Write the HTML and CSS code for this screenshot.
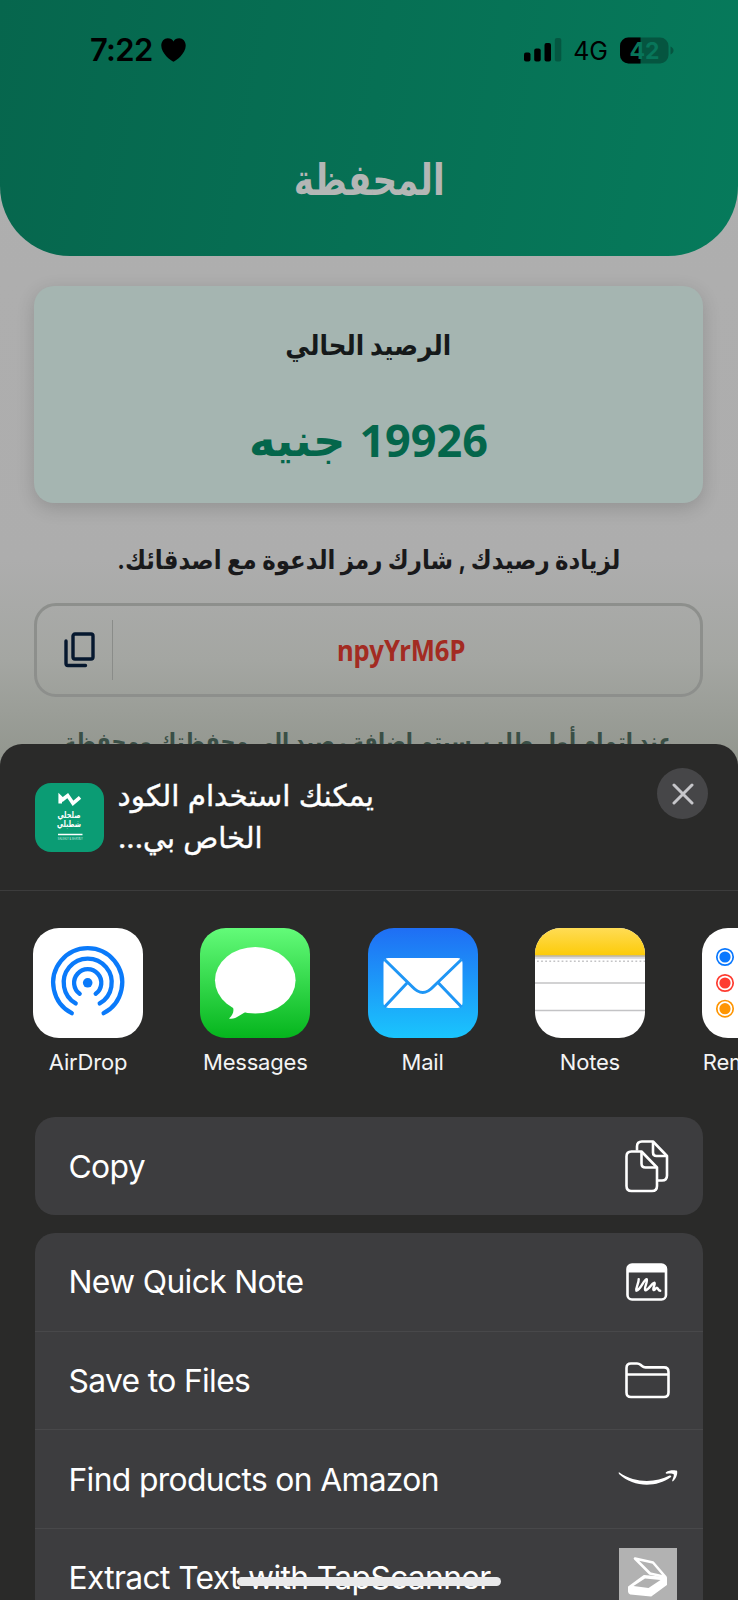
FILE: index.html
```html
<!DOCTYPE html>
<html lang="ar">
<head>
<meta charset="utf-8">
<title>المحفظة</title>
<link rel="stylesheet" href="styles.css">
</head>
<body>
<div class="screen">
  <header class="header">
    <div class="status">
      <div class="status-left">
        <span class="time">7:22</span>
        <svg class="heart" width="25" height="24" viewBox="0 0 26 24" preserveAspectRatio="none"><path d="M13 23.800C10 22.500.3 15.500.3 7.800.3 3.300 3.300.3 7 .3c2.700 0 4.900 1.200 6 3.200C14.100 1.500 16.300.3 19 .3c3.700 0 6.700 3 6.700 7.500C25.700 15.500 16 22.500 13 23.800z"/></svg>
      </div>
      <div class="status-right">
        <svg class="bars" width="38" height="24" viewBox="0 0 38 24"><rect x="0" y="14.500" width="6.500" height="9" rx="2"/><rect x="10.200" y="10.500" width="6.500" height="13" rx="2"/><rect x="20.500" y="5" width="6.500" height="18.500" rx="2"/><rect x="30.800" y="0" width="6.500" height="23.500" rx="2" opacity=".25"/></svg>
        <span class="net">4G</span>
        <svg class="battery" width="54" height="27" viewBox="0 0 54 27">
          <defs><clipPath id="lvl"><rect width="20.500" height="27"/></clipPath></defs>
          <rect x="0" y=".5" width="48.500" height="26" rx="8.500" fill="#055540"/>
          <path d="M50.500 9.500c2 .8 3 2.300 3 4s-1 3.200-3 4z" fill="#055540"/>
          <rect x="0" y=".5" width="48.500" height="26" rx="8.500" clip-path="url(#lvl)"/>
          <text class="pct" x="24.500" y="22" text-anchor="middle" fill="#08755a">42</text>
        </svg>
      </div>
    </div>
    <h1 class="title" dir="rtl"><span class="fit fit-title">المحفظة</span></h1>
  </header>

  <main class="wallet">
    <section class="balance">
      <div class="balance-label" dir="rtl"><span class="fit fit-label">الرصيد الحالي</span></div>
      <div class="balance-value" dir="rtl"><span class="amount">19926</span><span class="fit fit-unit">جنيه</span></div>
    </section>
    <p class="invite" dir="rtl"><span class="fit fit-invite">لزيادة رصيدك , شارك رمز الدعوة مع اصدقائك.</span></p>
    <div class="code-box">
      <div class="code-copy">
        <svg width="32" height="36" viewBox="0 0 32 36" fill="none" stroke="#06182f" stroke-width="3.400" stroke-linejoin="round" stroke-linecap="round"><rect x="9" y="2" width="20" height="25" rx="2"/><path d="M2 9v22.500a2 2 0 0 0 2 2h17.500"/></svg>
      </div>
      <div class="code"><span class="fit fit-code">npyYrM6P</span></div>
    </div>
    <p class="terms" dir="rtl"><span class="fit fit-terms">عند إتمام أول طلب, سيتم إضافة رصيد إلى محفظتك ومحفظة</span></p>
  </main>

  <section class="sheet">
    <div class="sheet-head">
      <svg class="app-logo" width="69" height="69" viewBox="0 0 69 69">
        <rect width="69" height="69" rx="16" fill="#0b9c74"/>
        <path d="M25.200 20.500V14l2.500 2.500 5-4 5.300 7.800 7-6" fill="none" stroke="#fff" stroke-width="3.600"/>
        <text x="34" y="34.500" class="logo-ar" text-anchor="middle" textLength="23" lengthAdjust="spacingAndGlyphs">صلحلي</text>
        <text x="34" y="44" class="logo-ar" text-anchor="middle" textLength="24" lengthAdjust="spacingAndGlyphs">شطبلي</text>
        <path d="M23 51.500h24.500" stroke="#fff" stroke-width="1.500"/>
        <text x="35.300" y="57" class="logo-en" text-anchor="middle" textLength="25" lengthAdjust="spacingAndGlyphs">SALEHLY &amp; SHATBLY</text>
      </svg>
      <div class="share-text">
        <div dir="rtl"><span class="fit">يمكنك استخدام الكود</span></div>
        <div dir="rtl"><span class="fit fit-s2">الخاص بي...</span></div>
      </div>
      <div class="close">
        <svg width="22" height="22" viewBox="0 0 22 22" stroke="#c6c6ca" stroke-width="3" stroke-linecap="round"><path d="M2 2l18 18M20 2L2 20"/></svg>
      </div>
    </div>

    <div class="apps">
      <div class="app">
        <svg class="tile" viewBox="0 0 110 110"><rect width="110" height="110" rx="26" fill="#fff"/>
          <g fill="none" stroke="#0a7afa" stroke-width="4.300" stroke-linecap="round"><path d="M38.800 85.200A34.500 34.500 0 1 1 70.600 85.200"/><path d="M42.700 75.400A24 24 0 1 1 66.700 75.400"/><path d="M46.700 65.800A13.600 13.600 0 1 1 62.700 65.800"/></g><circle cx="54.700" cy="54.800" r="4.800" fill="#0a7afa"/></svg>
        <span>AirDrop</span>
      </div>
      <div class="app">
        <svg class="tile" viewBox="0 0 110 110"><defs><linearGradient id="gm" x2="0" y2="1"><stop stop-color="#63fb79"/><stop offset="1" stop-color="#05b51d"/></linearGradient></defs>
          <rect width="110" height="110" rx="26" fill="url(#gm)"/><ellipse cx="55.300" cy="52.300" rx="40.300" ry="33.300" fill="#fff"/><path d="M32 77c3 5 1 10-3 13.500 6 1.300 11-3.500 16-6.200L50 78z" fill="#fff"/></svg>
        <span>Messages</span>
      </div>
      <div class="app">
        <svg class="tile" viewBox="0 0 110 110"><defs><linearGradient id="gl" x2="0" y2="1"><stop stop-color="#1f6ef4"/><stop offset="1" stop-color="#1ac5fd"/></linearGradient></defs>
          <rect width="110" height="110" rx="26" fill="url(#gl)"/><rect x="15.500" y="30" width="79" height="50" rx="5" fill="#fff"/>
          <path d="M16.500 31.500L44 58.500c7.500 8 14 8 21.500 0L93.500 31.500M39.500 54.500L16.500 79M70 54.500L93.500 79" fill="none" stroke="#1f96f5" stroke-width="3"/></svg>
        <span>Mail</span>
      </div>
      <div class="app">
        <svg class="tile" viewBox="0 0 110 110"><defs><linearGradient id="gn" x2="0" y2="1"><stop stop-color="#ffdc55"/><stop offset="1" stop-color="#fccb08"/></linearGradient><clipPath id="cn"><rect width="110" height="110" rx="26"/></clipPath></defs>
          <g clip-path="url(#cn)"><rect width="110" height="110" fill="#fff"/><rect width="110" height="27.500" fill="url(#gn)"/><rect y="27.300" width="110" height="1.500" fill="#b3a988"/><rect y="28.800" width="110" height="2" fill="#d8d7dc"/>
          <path d="M2 33.300h108" stroke="#c4c4c6" stroke-width="1.600" stroke-dasharray="1.800 2.300"/><path d="M0 55h110M0 82.500h110" stroke="#c3c3c5" stroke-width="1.300"/></g></svg>
        <span>Notes</span>
      </div>
      <div class="app">
        <svg class="tile" viewBox="0 0 110 110"><rect width="110" height="110" rx="26" fill="#fff"/>
          <g fill="none" stroke-width="1.700"><circle cx="23" cy="29" r="8.200" stroke="#0a78fe"/><circle cx="23" cy="55" r="8.200" stroke="#fe3b30"/><circle cx="23" cy="80.700" r="8.200" stroke="#fe9502"/></g>
          <circle cx="23" cy="29" r="5.600" fill="#0a78fe"/><circle cx="23" cy="55" r="5.600" fill="#fe3b30"/><circle cx="23" cy="80.700" r="5.600" fill="#fe9502"/></svg>
        <span>Reminders</span>
      </div>
    </div>

    <div class="group">
      <div class="row"><span>Copy</span>
        <svg width="60" height="58" viewBox="0 0 60 58" fill="none" stroke="#fff" stroke-width="2.600" stroke-linejoin="round"><path d="M19 13.500V9.500q0-5 5-5h11l14 14.500v19.500q0 5-5 5h-4"/><path d="M35 4.500v11q0 3.500 3.500 3.500h10.500"/><path d="M13.500 14.500h10l15.500 16v18.500q0 5-5 5H13.500q-5 0-5-5V19.500q0-5 5-5z"/><path d="M23.500 14.500v12q0 4 4 4H39"/></svg></div>
    </div>
    <div class="group">
      <div class="row"><span>New Quick Note</span>
        <svg width="60" height="58" viewBox="0 0 60 58" fill="none" stroke="#fff"><path d="M10 19.500V17q0-6 6-6h26q6 0 6 6v2.500H10z" fill="#fff" stroke="none"/><rect x="9.500" y="11.500" width="38.500" height="35" rx="4.500" stroke-width="2.600"/><path d="M20.700 26.200c.3 4-3.200 8.500-2.300 11.500 4.500-1 6.800-10.500 10.300-11.500 1.500 1.500-3 9.500-1.500 11 4 .3 5.500-6.700 9.300-7.400 1.300.8-2.200 6-1 7.200 1.300.8 2-2.200 3.500-2.200 1.200.3 1.200 3 3.200 3" stroke-width="2.400" stroke-linecap="round" stroke-linejoin="round"/></svg></div>
      <div class="row"><span>Save to Files</span>
        <svg width="60" height="58" viewBox="0 0 60 58" fill="none" stroke="#fff" stroke-width="2.600" stroke-linejoin="round"><path d="M8.500 16q0-4.500 4.500-4.500h6q2 0 3.500 1.300l1.500 1.300q1.500 1.300 3.500 1.300H46q4.500 0 4.500 4.500V40.500q0 4.500-4.500 4.500H13q-4.500 0-4.500-4.500zM8.500 22.500h42"/></svg></div>
      <div class="row"><span>Find products on Amazon</span>
        <svg width="60" height="58" viewBox="0 0 60 58" fill="#fff"><path d="M1 22.200C18 34 38 32.500 51.500 25.500c1.500-.5 2.500.8 1.200 1.800C38 38 15 37.500 1 24q-.8-1.500 0-1.800z"/><path d="M48 22.200c3-2.200 9-2.400 11-1.400 1 2.500-1 8.500-4 10.500-.8.300-1-.2-.8-.8 1-2.500 2-5 1.500-6.200-1-1-4.500-.8-7-.6-1 0-1.300-.9-.7-1.500z"/></svg></div>
      <div class="row"><span>Extract Text with TapScanner</span>
        <svg width="60" height="58" viewBox="0 0 60 58"><rect x="1" width="58" height="58" fill="#b2b2b2"/><path d="M17 10.500l18 4 12.500 14.500L32 25.500z" fill="none" stroke="#fff" stroke-width="2.600" stroke-linejoin="round"/><path d="M11 39L26 28l22 2v6.500L33 47.500l-20.500-2q-1.500-.5-1.500-2z" fill="#fff" stroke="#fff" stroke-width="2" stroke-linejoin="round"/><path d="M15.500 38L27 30.500l15.500 1.500-12 8z" fill="#b0b0b0"/></svg></div>
    </div>
  </section>
  <div class="home-indicator"></div>
</div>
</body>
</html>
```
FILE: styles.css
```css
* { box-sizing: border-box; }
body { margin: 0; }
h1, p { margin: 0; font-weight: inherit; }

.screen {
  position: relative;
  width: 738px;
  height: 1600px;
  overflow: hidden;
  display: flex;
  flex-direction: column;
  background: linear-gradient(#afafaf 0, #adadad 560px, #a4a6a2 660px, #92968e 760px);
  font-family: Inter, "DejaVu Sans", sans-serif;
}

.fit { display: inline-block; white-space: nowrap; }
.fit-title { transform: scale(.855, 1.08); }
.fit-label { transform: scaleX(.88); }
.fit-invite { transform: scaleX(.88); }
.fit-terms { transform: scaleX(.867); }
.fit-code { transform: scaleX(.915); transform-origin: center; }
.fit-s2 { transform: scaleX(.98); transform-origin: left; }

.header {
  height: 256px;
  flex: none;
  border-radius: 0 0 70px 70px;
  background: linear-gradient(100deg, #06664d, #067a5b);
}
.status {
  height: 100px;
  padding: 0 64px 0 90px;
  display: flex;
  justify-content: space-between;
  align-items: center;
}
.status-left, .status-right { display: flex; align-items: center; }
.status-left { gap: 8px; }
.time { font-size: 31px; font-weight: 600; line-height: 40px; letter-spacing: -.7px; }
.net { font-size: 25px; line-height: 40px; margin: 2px 12px 0 11px; }
.pct { font-family: Inter, sans-serif; font-size: 23px; font-weight: 700; }
.title {
  height: 160px;
  display: flex;
  justify-content: center;
  line-height: 160px;
  font-size: 40px;
  font-weight: 700;
  color: #b4b6b5;
}

.wallet { flex: none; height: 488px; padding: 30px 35px 0 34px; overflow: hidden; }
.balance {
  height: 217px;
  border-radius: 20px;
  background: #a5b5b1;
  box-shadow: 0 5px 18px rgba(0, 0, 0, .16);
  display: flex;
  flex-direction: column;
  align-items: center;
  padding-top: 29px;
}
.balance-label { height: 84px; line-height: 60px; font-size: 28px; font-weight: 700; color: #15191a; }
.balance-value {
  height: 80px;
  display: flex;
  align-items: center;
  gap: 14px;
  font-size: 45px;
  font-weight: 700;
  color: #04664b;
}
.amount { font-family: "Noto Sans", sans-serif; }
.invite { height: 100px; line-height: 114px; display: flex; justify-content: center; font-size: 26px; font-weight: 700; color: #19191b; }
.code-box {
  height: 94px;
  border: 3px solid #8d8f8c;
  border-radius: 22px;
  display: flex;
  align-items: center;
}
.code-copy { width: 76px; height: 60px; padding-left: 27px; display: flex; align-items: center; border-right: 1px solid #8a8c89; }
.code { flex: 1; padding-right: 11px; text-align: center; font-family: "Noto Sans", sans-serif; font-weight: 700; font-size: 28px; color: #a32b22; }
.terms { height: 60px; line-height: 90px; display: flex; justify-content: center; font-size: 24px; font-weight: 700; color: #3a4f46; }

.sheet {
  flex: none;
  height: 856px;
  border-radius: 22px 22px 0 0;
  background: #2a2a29;
  color: #fff;
}
.sheet-head {
  height: 147px;
  border-bottom: 1px solid #3c3c3c;
  display: flex;
  align-items: flex-start;
  padding: 24px 30px 0 34.5px;
}
.app-logo { margin-top: 15px; }
.logo-ar { font-family: "DejaVu Sans", sans-serif; font-size: 9px; font-weight: 700; fill: #fff; }
.logo-en { font-family: Inter, sans-serif; font-size: 3px; fill: #cfeee4; }
.share-text {
  flex: 1;
  display: flex;
  flex-direction: column;
  align-items: flex-start;
  padding: 6px 0 0 14px;
  font-size: 29.5px;
  line-height: 42px;
  -webkit-text-stroke: .4px #fff;
}
.close { width: 51px; height: 51px; border-radius: 50%; background: #464648; display: flex; align-items: center; justify-content: center; }

.apps { height: 226px; padding: 37px 0 0 33px; display: flex; gap: 57.3px; overflow: hidden; }
.app { flex: none; width: 110px; display: flex; flex-direction: column; align-items: center; font-size: 22px; letter-spacing: -.2px; line-height: 30px; color: #f4f4f4; }
.tile { width: 110px; height: 110px; margin-bottom: 9px; }

.group { margin: 0 35px 17.5px 34.5px; border-radius: 20px; background: #3d3d3f; overflow: hidden; }
.row {
  height: 98.3px;
  padding: 0 25.5px 0 34px;
  display: flex;
  align-items: center;
  justify-content: space-between;
  font-size: 31.8px;
  letter-spacing: -.65px;
  white-space: nowrap;
}
.row + .row { border-top: 1px solid #48484a; }

.home-indicator {
  position: absolute;
  left: 237px;
  top: 1577px;
  width: 264px;
  height: 9px;
  border-radius: 5px;
  background: #e9e9ea;
}
```
